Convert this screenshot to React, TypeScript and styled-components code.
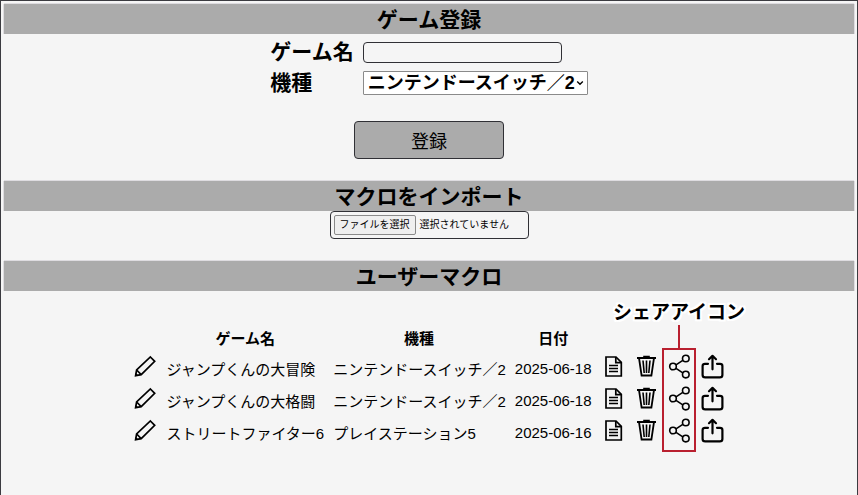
import React from "react";
import styled, { createGlobalStyle } from "styled-components";

const GlobalStyle = createGlobalStyle`
  *, *::before, *::after { box-sizing: border-box; }
  body {
    margin: 0;
    background: #f5f5f5;
    color: #000;
    font-family: "Liberation Sans", "Noto Sans CJK JP", sans-serif;
    font-size: 15px;
  }
  button, input, select { font-family: inherit; color: inherit; }
`;

const Frame = styled.main`
  min-height: 100vh;
  padding: 3px;
  border: solid #3b3b40;
  border-width: 1px 1px 0;
`;

const Section = styled.section<{ $gap: number }>`
  display: flex;
  flex-direction: column;
  align-items: center;
  padding-bottom: ${(p) => p.$gap}px;
`;

const Heading = styled.h2`
  align-self: stretch;
  height: 30px;
  margin: 0;
  background: #ababab;
  box-shadow: -1px 0 #dedce0, 1px 0 #dedce0, 0 -1px #dedce0;
  font-size: 21px;
  line-height: 32px;
  text-align: center;
`;

const Form = styled.form`
  display: flex;
  flex-direction: column;
  align-items: center;
  gap: 23px;
  padding-top: 3px;
`;

const Fields = styled.div`
  display: grid;
  grid-template-columns: auto auto;
  grid-auto-rows: 30px;
  gap: 1px 9px;
  align-items: center;
  justify-items: start;
`;

const FieldLabel = styled.label`
  font-size: 21px;
  font-weight: bold;
  line-height: 30px;
`;

const TextInput = styled.input`
  width: 199px;
  height: 21px;
  padding: 1px 4px;
  border: 1px solid #303035;
  border-radius: 4px;
  background: transparent;
  font-size: 15px;
`;

const SelectBox = styled.div`
  display: grid;
  grid-template-columns: 1fr 12px;
  align-items: center;
  width: 225px;

  svg {
    grid-area: 1 / 2;
    width: 8px;
    height: 6px;
    fill: none;
    stroke: #000;
    stroke-width: 1.4;
    pointer-events: none;
  }
`;

const Select = styled.select`
  grid-area: 1 / 1 / 2 / 3;
  width: 100%;
  height: 24px;
  padding: 0 0 0 4px;
  border: 1px solid #8a8a8a;
  border-radius: 1px;
  background: #fff;
  font-size: 18px;
  font-weight: bold;
  line-height: 22px;
  appearance: none;
`;

const SubmitButton = styled.button`
  width: 150px;
  height: 38px;
  padding: 0;
  border: 1px solid #303035;
  border-radius: 4px;
  background: #ababab;
  font-size: 18px;
`;

const FilePicker = styled.label`
  display: flex;
  align-items: center;
  gap: 4px;
  width: 199px;
  height: 28px;
  padding: 0 3px;
  border: 1px solid #303035;
  border-radius: 4px;
  font-size: 10px;
  line-height: 16px;
`;

const HiddenFile = styled.input`
  position: absolute;
  width: 1px;
  height: 1px;
  opacity: 0;
`;

const FileButton = styled.span`
  padding: 1px 5px;
  border: 1px solid #8a8a8a;
  border-radius: 2px;
  background: #efefef;
`;

const MacroTable = styled.table`
  margin-top: 32px;
  border-collapse: collapse;
  white-space: nowrap;
`;

const HeadCell = styled.th`
  position: relative;
  height: 29px;
  padding: 0 4px;
`;

const Cell = styled.td<{ $left?: number; $right?: number }>`
  height: 32px;
  padding: 0 ${(p) => p.$right ?? 4}px 0 ${(p) => p.$left ?? 4}px;
`;

const IconButton = styled.button`
  display: block;
  width: 25px;
  height: 25px;
  margin-bottom: 3px;
  padding: 0;
  border: 0;
  background: none;

  svg {
    display: block;
    width: 25px;
    height: 25px;
    fill: none;
    stroke: #000;
  }
`;

const Callout = styled.div`
  position: absolute;
  z-index: 1;
  top: -26px;
  left: 0;
  right: 0;
  display: flex;
  flex-direction: column;
  align-items: center;
  pointer-events: none;
`;

const CalloutText = styled.span`
  height: 28px;
  font-family: "Noto Sans CJK JP", sans-serif;
  font-size: 19px;
  font-weight: bold;
  line-height: 28px;
  text-shadow: 2px 0 #fff, -2px 0 #fff, 0 2px #fff, 0 -2px #fff, 2px 2px #fff,
    -2px 2px #fff, 2px -2px #fff, -2px -2px #fff;
`;

const CalloutStem = styled.span`
  width: 2px;
  height: 23px;
  background: #b9202f;
`;

const CalloutFrame = styled.span`
  width: 34px;
  height: 104px;
  border: 2px solid #b9202f;
`;

const PencilIcon = () => (
  <svg viewBox="0 0 25 25" strokeWidth="1.7">
    <path d="M17.4 3 21.7 7.3 8.2 20.6 2.6 21.6 3.6 16Z" />
    <path d="M3.6 16 8.2 20.6" />
    <path d="M2 22.2 2.6 18.8 5.4 21.6Z" fill="#000" stroke="none" />
  </svg>
);

const DocumentIcon = () => (
  <svg viewBox="0 0 25 25" strokeWidth="1.7">
    <path d="M5 3H15L20.3 8.3V22H5Z" />
    <path d="M14.8 3V8.6H20.3" />
    <path d="M8 11.5H17M8 14.5H17M8 17.5H17" strokeWidth="1.4" />
  </svg>
);

const TrashIcon = () => (
  <svg viewBox="0 0 25 25" strokeWidth="1.6">
    <path d="M3 4H22" strokeWidth="2" />
    <path d="M10 3.5V2.6H15V3.5" />
    <path d="M5 4 7.6 21.5H17.4L20 4" strokeWidth="1.8" />
    <path d="M9 6.5 10.2 19M12.5 6.5V19M16 6.5 14.8 19" />
  </svg>
);

const ShareIcon = () => (
  <svg viewBox="0 0 25 25" strokeWidth="1.6">
    <circle cx="6" cy="12.5" r="3.3" />
    <circle cx="18.8" cy="4.5" r="3.3" />
    <circle cx="18.8" cy="20.6" r="3.3" />
    <path d="M9 10.8 15.8 6.4M9 14.4 15.8 18.8" />
  </svg>
);

const ExportIcon = () => (
  <svg viewBox="0 0 25 25" strokeWidth="2.2" strokeLinecap="round" strokeLinejoin="round">
    <path d="M8 9.8H5Q2.6 9.8 2.6 12V21Q2.6 23.4 5.2 23.4H19.8Q22.4 23.4 22.4 21V12Q22.4 9.8 20 9.8H17" />
    <path d="M12.5 15.3V2M9 5.2 12.5 1.8 16 5.2" />
  </svg>
);

const macros = [
  { name: "ジャンプくんの大冒険", platform: "ニンテンドースイッチ／2", date: "2025-06-18" },
  { name: "ジャンプくんの大格闘", platform: "ニンテンドースイッチ／2", date: "2025-06-18" },
  { name: "ストリートファイター6", platform: "プレイステーション5", date: "2025-06-16" },
];

const actions = [
  { label: "詳細", Icon: DocumentIcon },
  { label: "削除", Icon: TrashIcon },
  { label: "シェア", Icon: ShareIcon },
  { label: "エクスポート", Icon: ExportIcon },
];

export default function App() {
  return (
    <>
      <GlobalStyle />
      <Frame>
        <Section $gap={22}>
          <Heading>ゲーム登録</Heading>
          <Form onSubmit={(e) => e.preventDefault()}>
            <Fields>
              <FieldLabel htmlFor="game">ゲーム名</FieldLabel>
              <TextInput id="game" type="text" />
              <FieldLabel htmlFor="platform">機種</FieldLabel>
              <SelectBox>
                <Select id="platform">
                  <option>ニンテンドースイッチ／2</option>
                  <option>プレイステーション5</option>
                </Select>
                <svg viewBox="0 0 8 6" aria-hidden="true">
                  <path d="M1.2 1.5 4 4.3 6.8 1.5" />
                </svg>
              </SelectBox>
            </Fields>
            <SubmitButton type="submit">登録</SubmitButton>
          </Form>
        </Section>

        <Section $gap={22}>
          <Heading>マクロをインポート</Heading>
          <FilePicker>
            <HiddenFile type="file" />
            <FileButton>ファイルを選択</FileButton>
            <span>選択されていません</span>
          </FilePicker>
        </Section>

        <Section $gap={22}>
          <Heading>ユーザーマクロ</Heading>
          <MacroTable>
            <thead>
              <tr>
                <HeadCell />
                <HeadCell scope="col">ゲーム名</HeadCell>
                <HeadCell scope="col">機種</HeadCell>
                <HeadCell scope="col">日付</HeadCell>
                <HeadCell />
                <HeadCell />
                <HeadCell>
                  <Callout>
                    <CalloutText>シェアアイコン</CalloutText>
                    <CalloutStem />
                    <CalloutFrame />
                  </Callout>
                </HeadCell>
                <HeadCell />
              </tr>
            </thead>
            <tbody>
              {macros.map((macro) => (
                <tr key={macro.name}>
                  <Cell>
                    <IconButton type="button" aria-label="編集">
                      <PencilIcon />
                    </IconButton>
                  </Cell>
                  <Cell>{macro.name}</Cell>
                  <Cell $left={5}>{macro.platform}</Cell>
                  <Cell $left={5} $right={5}>{macro.date}</Cell>
                  {actions.map(({ label, Icon }) => (
                    <Cell key={label}>
                      <IconButton type="button" aria-label={label}>
                        <Icon />
                      </IconButton>
                    </Cell>
                  ))}
                </tr>
              ))}
            </tbody>
          </MacroTable>
        </Section>
      </Frame>
    </>
  );
}
